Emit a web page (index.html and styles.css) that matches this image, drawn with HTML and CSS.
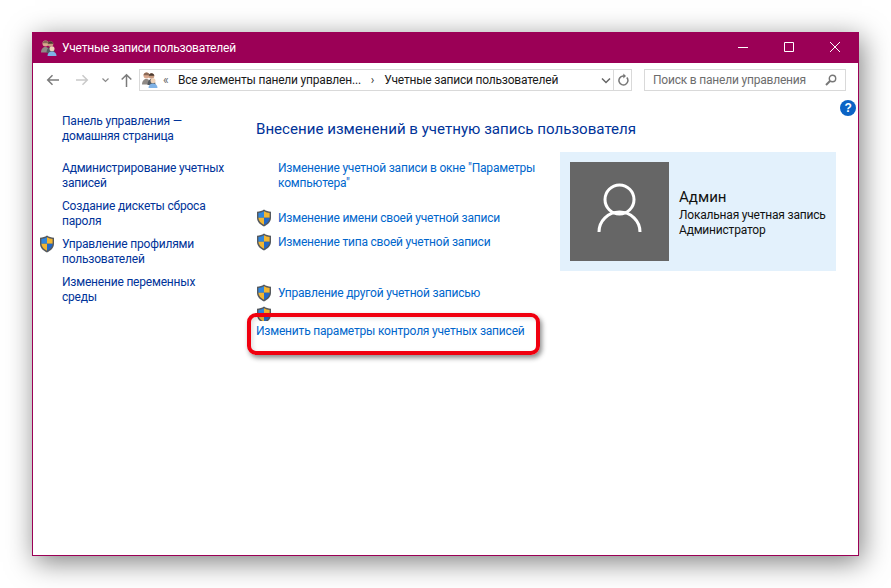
FILE: index.html
```html
<!DOCTYPE html>
<html lang="ru">
<head>
<meta charset="utf-8">
<title>Учетные записи пользователей</title>
<link rel="stylesheet" href="styles.css">
</head>
<body>
<svg class="defs" width="0" height="0" aria-hidden="true">
  <defs>
    <symbol id="shield" viewBox="0 0 16 18">
      <path d="M8 .6C6 2 3.600 2.700 1 2.800v6c0 4 3 6.900 7 8.600 4-1.700 7-4.600 7-8.600v-6C12.400 2.700 10 2 8 .6z" fill="#55595e"/>
      <path d="M8 2.300C6.200 3.300 4.300 3.900 2.400 4v4.700H8z" fill="#2f86de"/>
      <path d="M8 2.300C9.800 3.300 11.700 3.900 13.600 4v4.700H8z" fill="#f2b632"/>
      <path d="M2.400 8.700H8v7C5 14.300 2.600 12 2.400 8.700z" fill="#f2b632"/>
      <path d="M13.600 8.700H8v7c3-1.400 5.400-3.700 5.600-7z" fill="#2268c8"/>
    </symbol>
    <symbol id="users" viewBox="0 0 16 16">
      <circle cx="4.500" cy="3.500" r="3" fill="#d9a98f"/>
      <path d="M1.500 3.200C1.800 1.300 3 .5 4.500.5s2.700.8 3 2.700z" fill="#8a6a58"/>
      <path d="M0 12.500c0-3.500 2-5.500 4.500-5.500S8 9 8 12.500z" fill="#8f8a86"/>
      <circle cx="9.500" cy="4" r="2.800" fill="#c79a80"/>
      <path d="M6.700 3.800C7 2 8 1.200 9.500 1.200s2.500.8 2.800 2.600z" fill="#4a3a30"/>
      <path d="M5.500 13c0-3.500 1.800-6 4-6s4 2.500 4 6z" fill="#555a60"/>
      <circle cx="11" cy="8.800" r="2.500" fill="#efd2b8"/>
      <path d="M6.500 16c0-2.800 1.900-4.500 4.500-4.500s4.500 1.700 4.500 4.500z" fill="#7fb2e6"/>
    </symbol>
  </defs>
</svg>
<div class="window">
  <header class="titlebar">
    <svg class="ico16"><use href="#users"/></svg>
    <span class="title">Учетные записи пользователей</span>
    <div class="controls">
      <svg class="ctl" viewBox="0 0 46 30"><path d="M18 14.500h10" stroke="#fff" fill="none"/></svg>
      <svg class="ctl" viewBox="0 0 46 30"><path d="M18.500 9.500h9v9h-9z" stroke="#fff" fill="none"/></svg>
      <svg class="ctl" viewBox="0 0 46 30"><path d="M18 9l10 10M28 9L18 19" stroke="#fff" fill="none"/></svg>
    </div>
  </header>
  <div class="toolbar">
    <svg class="nav back" viewBox="0 0 13 12"><path d="M13 6H2M6.500 1.200L1.700 6l4.800 4.800" stroke="#7b7b7b" stroke-width="1.500" fill="none"/></svg>
    <svg class="nav fwd" viewBox="0 0 13 12"><path d="M0 6h11M6.500 1.200L11.300 6l-4.800 4.800" stroke="#c9c9c9" stroke-width="1.500" fill="none"/></svg>
    <svg class="drop" viewBox="0 0 7 6"><path d="M.5 1.500l3 3 3-3" stroke="#8a8a8a" stroke-width="1.200" fill="none"/></svg>
    <svg class="nav up" viewBox="0 0 13 14"><path d="M6.500 14V2M1.700 6.500L6.500 1.700l4.800 4.800" stroke="#7b7b7b" stroke-width="1.500" fill="none"/></svg>
    <div class="address">
      <svg class="ico16"><use href="#users"/></svg>
      <span class="chev">«</span>
      <span class="crumb">Все элементы панели управлен...</span>
      <span class="sep">›</span>
      <span class="crumb">Учетные записи пользователей</span>
      <svg class="addr-drop" viewBox="0 0 10 7"><path d="M1 1.500l4 4 4-4" stroke="#666" stroke-width="1.500" fill="none"/></svg>
      <span class="refresh">
        <svg viewBox="0 0 12 14" width="12" height="14"><path d="M9.800 4.500A4.500 4.500 0 1 1 6 3H8" stroke="#777" stroke-width="1.500" fill="none"/><path d="M6.300.5L9 3 6.300 5.500z" fill="#777"/></svg>
      </span>
    </div>
    <div class="search">
      <span>Поиск в панели управления</span>
      <svg viewBox="0 0 12 12" width="12" height="12"><circle cx="7.500" cy="4.500" r="3.200" stroke="#777" stroke-width="1.400" fill="none"/><path d="M5 7L1 11" stroke="#777" stroke-width="2" fill="none"/></svg>
    </div>
  </div>
  <div class="helprow"><span class="help">?</span></div>
  <div class="content">
    <nav class="side">
      <a class="side-item"><span class="slot"></span><span>Панель управления —<br>домашняя страница</span></a>
      <a class="side-item gap-a"><span class="slot"></span><span>Администрирование учетных<br>записей</span></a>
      <a class="side-item gap-b"><span class="slot"></span><span>Создание дискеты сброса<br>пароля</span></a>
      <a class="side-item gap-b"><span class="slot"><svg class="shield"><use href="#shield"/></svg></span><span>Управление профилями<br>пользователей</span></a>
      <a class="side-item gap-b"><span class="slot"></span><span>Изменение переменных<br>среды</span></a>
    </nav>
    <main class="main">
      <h1 class="heading">Внесение изменений в учетную запись пользователя</h1>
      <div class="columns">
        <div class="tasks">
          <a class="task"><span class="slot2"></span><span>Изменение учетной записи в окне "Параметры<br>компьютера"</span></a>
          <a class="task t-a"><span class="slot2"><svg class="shield"><use href="#shield"/></svg></span><span>Изменение имени своей учетной записи</span></a>
          <a class="task t-b"><span class="slot2"><svg class="shield"><use href="#shield"/></svg></span><span>Изменение типа своей учетной записи</span></a>
          <a class="task t-c"><span class="slot2"><svg class="shield"><use href="#shield"/></svg></span><span>Управление другой учетной записью</span></a>
          <div class="hidden-shield"><svg class="shield"><use href="#shield"/></svg></div>
          <a class="uac">Изменить параметры контроля учетных записей</a>
        </div>
        <aside class="card">
          <div class="avatar">
            <svg viewBox="0 0 99 99" width="99" height="99"><circle cx="49.500" cy="37.500" r="14.500" stroke="#fff" stroke-width="3" fill="none"/><path d="M29 70c0-11 9-20 20.500-20S70 59 70 70" stroke="#fff" stroke-width="3" fill="none"/></svg>
          </div>
          <div class="who">
            <div class="name">Админ</div>
            <div>Локальная учетная запись</div>
            <div>Администратор</div>
          </div>
        </aside>
      </div>
    </main>
  </div>
  <div class="marker"></div>
</div>
</body>
</html>
```
FILE: styles.css
```css
* { box-sizing: border-box; }
html, body { margin: 0; height: 100%; }
body {
  padding: 32px;
  background: #fff;
  font: 12px/15px Roboto, "Noto Sans", sans-serif;
  letter-spacing: -.2px;
  overflow: hidden;
}
.defs { position: absolute; }
.window {
  position: relative;
  width: 827px;
  height: 524px;
  background: #fff;
  border: 1px solid #9b0056;
  box-shadow: 3px 6px 26px rgba(0, 0, 0, .5);
  display: flex;
  flex-direction: column;
}
.titlebar {
  height: 30px;
  flex: none;
  background: #9b0056;
  color: #fff;
  display: flex;
  align-items: center;
  padding-left: 8px;
}
.ico16 { width: 16px; height: 16px; flex: none; }
.title { margin-left: 5px; }
.controls { margin-left: auto; display: flex; }
.ctl { width: 46px; height: 30px; }
.toolbar {
  height: 30px;
  margin-top: 2px;
  flex: none;
  display: flex;
  align-items: center;
  padding-left: 13px;
}
.nav.back { width: 13px; height: 12px; }
.nav.fwd { width: 13px; height: 12px; margin-left: 17px; }
.drop { width: 7px; height: 6px; margin-left: 13px; }
.nav.up { width: 13px; height: 14px; margin-left: 11px; }
.address {
  width: 493px;
  height: 22px;
  margin-left: 6px;
  border: 1px solid #d9d9d9;
  display: flex;
  align-items: center;
  padding-left: 2px;
  color: #1a1a1a;
}
.chev { margin-left: 5px; color: #666; width: 13px; }
.crumb { margin-left: 2px; white-space: nowrap; }
.sep { margin-left: 10px; margin-right: 8px; color: #333; }
.addr-drop { width: 10px; height: 7px; margin-left: auto; margin-right: 2px; }
.refresh {
  width: 18px;
  height: 20px;
  border-left: 1px solid #d9d9d9;
  display: flex;
  align-items: center;
  justify-content: center;
}
.search {
  width: 202px;
  height: 22px;
  margin-left: 12px;
  border: 1px solid #d9d9d9;
  display: flex;
  align-items: center;
  justify-content: space-between;
  padding: 0 8px 0 8px;
  color: #6d6d6d;
}
.helprow { height: 0; display: flex; justify-content: flex-end; padding-right: 2px; }
.help {
  width: 16px;
  height: 16px;
  margin-top: 5px;
  border-radius: 50%;
  background: #0b63c5;
  color: #fff;
  font: bold 12px/16px "Liberation Sans", sans-serif;
  text-align: center;
}
.content { flex: 1; display: flex; min-height: 0; }
.side { width: 223px; flex: none; padding: 19px 0 0 6px; }
.side-item { display: flex; color: #003399; }
.slot { width: 16px; height: 15px; flex: none; margin-right: 7px; }
.gap-a { margin-top: 17px; }
.gap-b { margin-top: 8px; }
.shield { width: 16px; height: 18px; display: block; }
.slot .shield { margin-top: -2px; }
.main { flex: 1; min-width: 0; }
.heading {
  margin: 24px 0 0;
  font-size: 15.1px;
  line-height: 20px;
  font-weight: 400;
  letter-spacing: 0;
  color: #003399;
}
.columns { display: flex; }
.tasks { width: 304px; flex: none; color: #0066cc; padding-top: 22px; }
.task { display: flex; }
.slot2 { width: 16px; height: 15px; flex: none; margin-right: 6px; }
.slot2 .shield { margin-top: -2px; }
.t-a { margin-top: 20px; }
.t-b { margin-top: 9px; }
.t-c { margin-top: 36px; }
.hidden-shield { height: 15px; overflow: hidden; margin-top: 5px; }
.uac { display: block; white-space: nowrap; margin-top: 3px; }
.card {
  width: 276px;
  height: 119px;
  margin-top: 13px;
  padding: 10px;
  background: #e3f1fc;
  display: flex;
  align-items: center;
}
.avatar { width: 99px; height: 99px; background: #666; flex: none; }
.avatar svg { display: block; }
.who { margin-left: 10px; margin-top: 1px; color: #111; white-space: nowrap; }
.name { font-size: 15.1px; line-height: 21px; letter-spacing: 0; }
.marker {
  position: absolute;
  left: 214px;
  top: 280px;
  width: 293px;
  height: 42px;
  border: 4px solid #f0000f;
  border-radius: 9px;
  box-shadow: 2px 3px 5px rgba(0, 0, 0, .45), inset 2px 2px 4px rgba(0, 0, 0, .12);
}
```
